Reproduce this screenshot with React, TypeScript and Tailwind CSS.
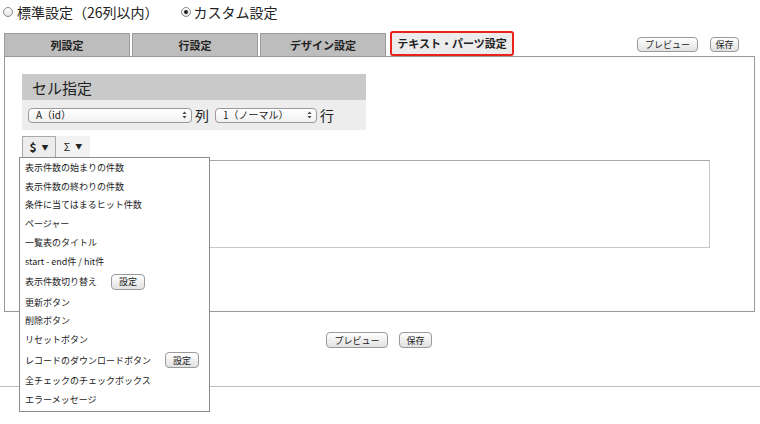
import type { ReactNode } from 'react';

const FONT = '"Noto Sans CJK JP", "Noto Sans", "Liberation Sans", sans-serif';

function SmallButton({ children, className = '' }: { children: ReactNode; className?: string }) {
  return (
    <span
      className={`inline-flex shrink-0 items-center justify-center rounded-[4px] border border-[#9a9a9a] bg-gradient-to-b from-white to-[#e2e2e2] text-[9px] leading-none text-[#222] ${className}`}
    >
      {children}
    </span>
  );
}

function Radio({ checked }: { checked?: boolean }) {
  return (
    <span className="flex h-[10px] w-[10px] shrink-0 items-center justify-center rounded-full border border-[#8a8a8a] bg-gradient-to-b from-white to-[#e6e6e6]">
      {checked ? <span className="h-[4px] w-[4px] rounded-full bg-[#222]" /> : null}
    </span>
  );
}

function UpDown() {
  return (
    <svg width="5" height="8" viewBox="0 0 5 8" className="shrink-0">
      <path d="M2.5 0.5 L4.5 3 L0.5 3 Z" fill="#444" />
      <path d="M0.5 5 L4.5 5 L2.5 7.5 Z" fill="#444" />
    </svg>
  );
}

function FakeSelect({ label, width }: { label: string; width: string }) {
  return (
    <span
      className={`flex h-[15px] items-center justify-between rounded-[4px] border border-[#9a9a9a] bg-gradient-to-b from-white to-[#f1f1f1] pl-[7px] pr-[4px] text-[10px] leading-none text-[#222] ${width}`}
    >
      <span>{label}</span>
      <UpDown />
    </span>
  );
}

const tabs = ['列設定', '行設定', 'デザイン設定'];

type Item = { label: string; button?: boolean };

const items: Item[] = [
  { label: '表示件数の始まりの件数' },
  { label: '表示件数の終わりの件数' },
  { label: '条件に当てはまるヒット件数' },
  { label: 'ページャー' },
  { label: '一覧表のタイトル' },
  { label: 'start - end件 / hit件' },
  { label: '表示件数切り替え', button: true },
  { label: '更新ボタン' },
  { label: '削除ボタン' },
  { label: 'リセットボタン' },
  { label: 'レコードのダウンロードボタン', button: true },
  { label: '全チェックのチェックボックス' },
  { label: 'エラーメッセージ' },
];

export default function App() {
  return (
    <div className="relative h-[424px] w-[760px] overflow-hidden bg-white text-[#222]" style={{ fontFamily: FONT }}>
      {/* mode radios */}
      <div className="flex h-[23px] items-center pl-[3px] text-[14px] leading-none">
        <Radio />
        <span className="ml-[4px]">標準設定（26列以内）</span>
        <span className="ml-[22px]" />
        <Radio checked />
        <span className="ml-[3px]">カスタム設定</span>
      </div>

      {/* tabs */}
      <div className="mt-[9px] flex h-[24px] items-end pl-[4px] pr-[21px]">
        {tabs.map((t) => (
          <div
            key={t}
            className="mr-[2px] flex h-[23px] w-[126px] items-center justify-center border border-b-0 border-[#9c9c9c] bg-[#bdbdbd] text-[11px] font-bold leading-none"
          >
            {t}
          </div>
        ))}
        <div className="ml-[2px] flex h-[25px] w-[124px] items-center justify-center rounded-[3px] border-2 border-[#e8231c] bg-[#ececec] text-[11px] font-bold leading-none">
          テキスト・パーツ設定
        </div>
        <div className="ml-auto flex items-center gap-[12px] self-center pt-[1px]">
          <SmallButton className="h-[15px] w-[61px]">プレビュー</SmallButton>
          <SmallButton className="h-[15px] w-[29px]">保存</SmallButton>
        </div>
      </div>

      {/* main panel */}
      <div className="mx-[4px] mr-[5px] h-[256px] border border-[#9a9a9a] pl-[17px] pt-[17px]">
        <div className="w-[344px]">
          <div className="flex h-[26px] items-center bg-[#c9c9c9] pl-[10px] text-[15px] leading-none">セル指定</div>
          <div className="flex h-[30px] items-center bg-[#ededed] pl-[6px] text-[14px] leading-none">
            <FakeSelect label="A（id）" width="w-[164px]" />
            <span className="ml-[3px]">列</span>
            <FakeSelect label="1（ノーマル）" width="ml-[6px] w-[102px]" />
            <span className="ml-[3px]">行</span>
          </div>
        </div>

        <div className="mt-[6px] flex h-[21px] items-stretch text-[11px] font-bold leading-none">
          <span className="flex w-[34px] items-center justify-center gap-[5px] border border-b-0 border-[#a8a8a8] bg-[#ececec]">
            <span className="text-[12px]">$</span>
            <span className="text-[7px]">▼</span>
          </span>
          <span className="flex w-[34px] items-center justify-center gap-[5px] bg-[#f2f2f2] font-normal">
            <span>Σ</span>
            <span className="text-[7px]">▼</span>
          </span>
        </div>

        <div className="ml-[187px] mt-[3px] h-[88px] w-[501px] border border-[#a9a9a9] border-b-[#c8c8c8] border-r-[#c8c8c8] bg-white" />
      </div>

      {/* bottom buttons */}
      <div className="mt-[20px] flex justify-center gap-[11px] pr-[2px]">
        <SmallButton className="h-[16px] w-[62px]">プレビュー</SmallButton>
        <SmallButton className="h-[16px] w-[33px]">保存</SmallButton>
      </div>

      <div className="mt-[38px] h-px w-full bg-[#bdbdbd]" />

      {/* dropdown menu */}
      <div className="absolute left-[19px] top-[157px] w-[191px] border border-[#8c8c8c] bg-white pb-[2px] pl-[5px] text-[9px] leading-none text-[#1a1a1a]">
        {items.map((it) => (
          <div
            key={it.label}
            className={`flex items-center whitespace-nowrap ${it.button ? 'h-[22px]' : 'h-[18.8px]'}`}
          >
            <span>{it.label}</span>
            {it.button ? <SmallButton className="ml-[14px] h-[16px] w-[34px]">設定</SmallButton> : null}
          </div>
        ))}
      </div>
    </div>
  );
}
